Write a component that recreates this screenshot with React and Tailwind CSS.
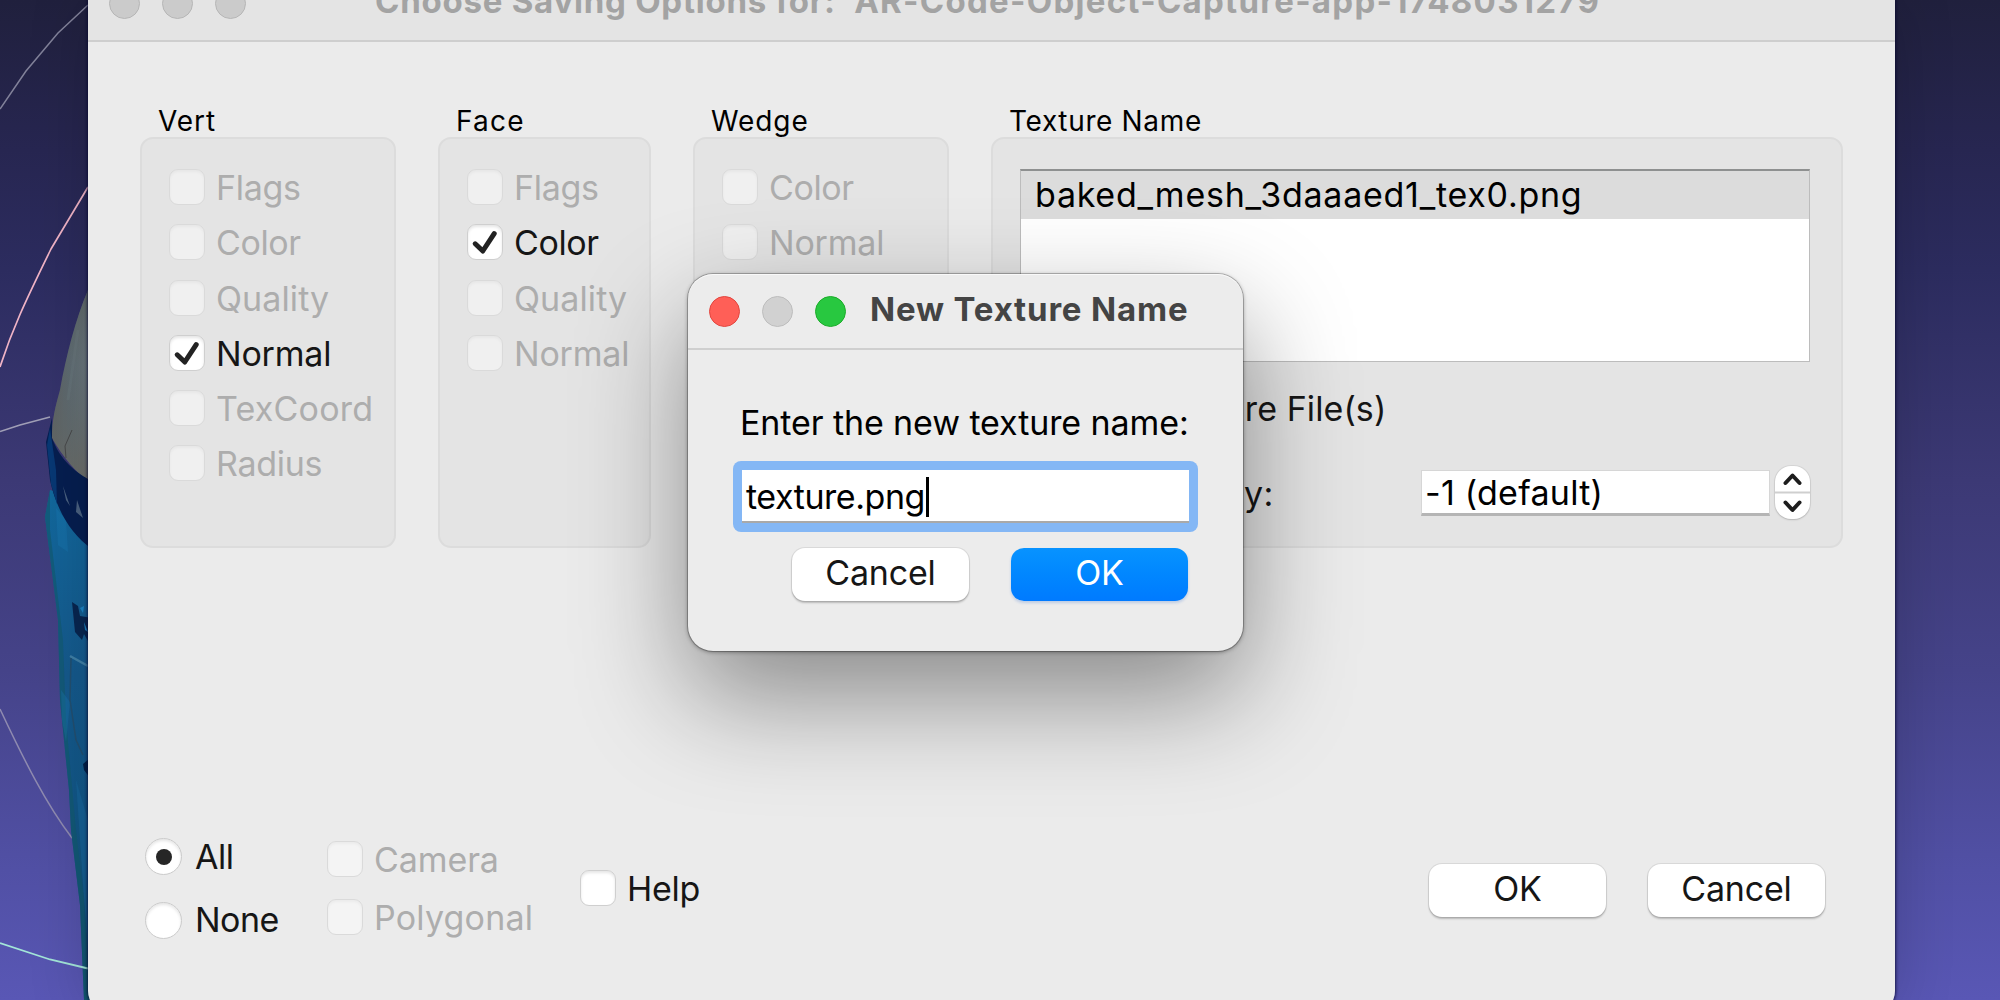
const FONT = "font-['Inter','Liberation_Sans',sans-serif]";

function Scene() {
  return (
    <svg className="absolute left-0 top-0" width="120" height="1000" viewBox="0 0 120 1000" fill="none">
      <defs>
        <linearGradient id="cap" x1="50" y1="0" x2="90" y2="0" gradientUnits="userSpaceOnUse">
          <stop offset="0" stopColor="#5a5e5e" />
          <stop offset="0.5" stopColor="#5f6c73" />
          <stop offset="1" stopColor="#6e7a80" />
        </linearGradient>
        <linearGradient id="capShade" x1="0" y1="290" x2="0" y2="480" gradientUnits="userSpaceOnUse">
          <stop offset="0" stopColor="#555b56" stopOpacity="0.6" />
          <stop offset="0.4" stopColor="#5f6b6f" stopOpacity="0.1" />
          <stop offset="1" stopColor="#6c6b64" stopOpacity="0.8" />
        </linearGradient>
        <linearGradient id="label" x1="0" y1="500" x2="0" y2="1000" gradientUnits="userSpaceOnUse">
          <stop offset="0" stopColor="#12679c" />
          <stop offset="0.35" stopColor="#15598c" />
          <stop offset="0.6" stopColor="#125788" />
          <stop offset="1" stopColor="#14506f" />
        </linearGradient>
      </defs>
      <path d="M0 109 L26 71 L58 33 L88 5" stroke="#82829a" strokeWidth="1.5" />
      <path d="M0 367 C12 330 24 304 51 249 L88 187" stroke="#f0b4c6" strokeWidth="1.7" />
      <path d="M0 431.5 L20 425 L50 417" stroke="#a09fb6" strokeWidth="1.6" />
      <path d="M0 709 C24 760 46 804 72 838" stroke="#8f8bb0" strokeWidth="1.5" />
      <path d="M50 490 L45 517 L58 620 L60 700 L69 790 L71 830 L80 905 L84 1000 L92 1000 L92 500Z" fill="url(#label)" />
      <path d="M50 490 L45 517 L58 620 L60 700 L69 790 L71 830 L80 905 L84 1000 L90 1000 L84 900 L76 830 L66 720 L63 640 L50 530Z" fill="#135a70" opacity="0.7" />
      <path d="M61 690 L70 702 L66 742 L62 720Z M56 508 L66 520 L68 552 L58 545Z" fill="#1b7fb8" opacity="0.3" />
      <path d="M76 780 L88 820 L88 950 L82 870Z" fill="#17659c" opacity="0.6" />
      <path d="M88 290 C76 318 66 356 60 390 C55 408 52 420 52 438 C62 455 76 474 92 483 L92 282Z" fill="url(#cap)" />
      <path d="M88 290 C76 318 66 356 60 390 C55 408 52 420 52 438 C62 455 76 474 92 483 L92 282Z" fill="url(#capShade)" />
      <path d="M72 430 L65 446 L66 458" stroke="#48494a" strokeWidth="1" />
      <path d="M78 330 L68 400" stroke="#6d7a80" strokeWidth="3" opacity="0.35" />
      <path d="M52 418 L46 442 L50 480 C56 508 70 534 92 549 L92 481 C76 473 60 460 52 438Z" fill="#061e50" />
      <path d="M50 428 L47 445 L51 484 L57 504 L56 470Z" fill="#083874" />
      <path d="M63 486 L70 506 L66 500Z M77 500 L83 518 L76 512Z" fill="#4a6180" />
      <path d="M72 602 L78 606 L80 616 L92 618 L92 648 L84 634 L82 640 L75 632Z" fill="#082650" />
      <path d="M80 608 L84 606 L83 613Z M84 622 L88 632 L85 630Z" fill="#1c83c4" />
      <path d="M70 656 L88 666" stroke="#3f7fa6" strokeWidth="2.5" />
      <path d="M71 658 L70 700 L76 740 L83 755" stroke="#224f70" strokeWidth="1.5" />
      <path d="M83 764 L90 758 L90 778 L84 770Z" fill="#04224a" />
      <path d="M0 943 L50 959.5 L88 968.5" stroke="#a3e6d8" strokeWidth="1.8" />
    </svg>
  );
}

function Light({ className }) {
  return <span className={`size-[31px] shrink-0 rounded-full border ${className}`} />;
}

function CheckBox({ label, checked, enabled, tracking = "" }) {
  const box = enabled
    ? "border-[#cfcfcf] bg-white shadow-[inset_0_2px_3px_rgba(0,0,0,0.1)]"
    : "border-[#dadada] bg-white/45 shadow-[inset_0_2px_3px_rgba(0,0,0,0.04)]";
  return (
    <label className="flex h-9 items-center">
      <span className={`flex size-9 shrink-0 items-center justify-center rounded-[9px] border ${box}`}>
        {checked && (
          <svg width="28" height="28" viewBox="0 0 28 28" fill="none">
            <path d="M4.2 15.8 L11.8 23 L23.2 5.6" stroke="#222" strokeWidth="5" strokeLinecap="round" strokeLinejoin="round" />
          </svg>
        )}
      </span>
      <span className={`ml-[11px] whitespace-nowrap pt-[3px] ${enabled ? "text-[#161616]" : "text-[#adadad]"} ${tracking}`}>{label}</span>
    </label>
  );
}

function Radio({ label, checked }) {
  return (
    <label className="flex h-[37px] items-center">
      <span className="flex size-[37px] items-center justify-center rounded-full border border-[#cbcbcb] bg-white shadow-[inset_0_2px_3px_rgba(0,0,0,0.1)]">
        {checked && <span className="size-[16px] rounded-full bg-[#262626]" />}
      </span>
      <span className="ml-[13px] pt-px tracking-[-0.5px] text-[#161616]">{label}</span>
    </label>
  );
}

function Group({ title, width, children, titleTracking = "tracking-[0.9px]" }) {
  return (
    <section className={`flex h-full shrink-0 flex-col ${width}`}>
      <h2 className={`relative z-10 h-[33px] pl-[18px] text-[28px] leading-[34px] text-black ${titleTracking}`}>{title}</h2>
      <div className="min-h-0 flex-1 rounded-[13px] border-2 border-[#dcdcdc] bg-[#e4e4e4]">{children}</div>
    </section>
  );
}

function CheckList({ items }) {
  return (
    <div className="flex flex-col gap-[19.25px] pl-[27px] pt-[30px]">
      {items.map((item) => (
        <CheckBox key={item.label} {...item} />
      ))}
    </div>
  );
}

function Button({ children, className }) {
  return (
    <button
      className={`flex h-[53px] w-[177px] shrink-0 items-center justify-center rounded-[13px] pb-[2px] tracking-[-0.2px] ${className}`}
    >
      {children}
    </button>
  );
}

const PLAIN = "bg-white text-[#161616] shadow-[0_0_0_1px_rgba(0,0,0,0.08),0_2px_2px_rgba(0,0,0,0.22)]";

const VERT = [
  { label: "Flags", tracking: "tracking-[-0.3px]" },
  { label: "Color", tracking: "tracking-[-0.4px]" },
  { label: "Quality", tracking: "tracking-[0.1px]" },
  { label: "Normal", checked: true, enabled: true, tracking: "tracking-[-0.2px]" },
  { label: "TexCoord", tracking: "tracking-[0.2px]" },
  { label: "Radius", tracking: "tracking-[-0.3px]" },
];
const FACE = [
  { label: "Flags", tracking: "tracking-[-0.3px]" },
  { label: "Color", checked: true, enabled: true, tracking: "tracking-[-0.4px]" },
  { label: "Quality", tracking: "tracking-[0.1px]" },
  { label: "Normal", tracking: "tracking-[-0.2px]" },
];
const WEDGE = [
  { label: "Color", tracking: "tracking-[-0.4px]" },
  { label: "Normal", tracking: "tracking-[-0.2px]" },
];

function TexturePanel() {
  return (
    <div className="flex flex-col pl-[27px] pt-[30px]">
      <div className="h-[193px] w-[790px] border border-[#bcbcbc] border-t-2 border-t-[#8e9090] bg-white">
        <div className="flex h-[48px] items-center bg-[#dcdcdc] pl-[14px] tracking-[0.74px] text-black">
          baked_mesh_3daaaed1_tex0.png
        </div>
      </div>
      <div className="mt-[28px]">
        <CheckBox label="Save Texture File(s)" enabled tracking="tracking-[0.08px]" />
      </div>
      <div className="mt-[39px] flex h-[55px] items-center">
        <span className="w-[401px] pt-[3px] tracking-[0.38px] text-[#161616]">Texture quality:</span>
        <span className="flex h-[46px] w-[349px] items-center border border-b-[3px] border-[#d6d6d6] border-b-[#b5b5b5] bg-white pl-[3px] pt-[3px] tracking-[0.25px] text-black">
          -1 (default)
        </span>
        <span className="ml-[5px] flex h-[53px] w-[35px] flex-col items-center rounded-[16px] bg-white shadow-[0_0_0_1px_rgba(0,0,0,0.06),0_1px_2px_rgba(0,0,0,0.15)]">
          <svg width="35" height="53" viewBox="0 0 35 53" fill="none">
            <path d="M0 26.5 H35" stroke="#cfcfcf" strokeWidth="2" />
            <path d="M10.5 17 L17.5 9.5 L24.5 17 M10.5 36.5 L17.5 44 L24.5 36.5" stroke="#1d1d1d" strokeWidth="4" strokeLinecap="round" strokeLinejoin="round" />
          </svg>
        </span>
      </div>
    </div>
  );
}

function SaveWindow() {
  return (
    <main className="relative ml-[88px] flex h-[1013px] w-[1807px] flex-col overflow-hidden rounded-b-[22px] bg-[#ebebeb]">
      <header className="h-[42px] overflow-hidden border-b-2 border-[#cecece] bg-[#e4e4e4]">
        <div className="-mt-[35px] flex h-[76px] items-center pl-[21px]">
          <div className="flex gap-[22px]">
            <Light className="border-[#b6b6b6] bg-[#cbcbcb]" />
            <Light className="border-[#b6b6b6] bg-[#cbcbcb]" />
            <Light className="border-[#b6b6b6] bg-[#cbcbcb]" />
          </div>
          <h1 className="ml-[129px] whitespace-nowrap pb-[3px] text-[33px] font-bold tracking-[0.76px] text-[#a3a3a3]">
            Choose Saving Options for: <span className="tracking-[1.28px]">'AR-Code-Object-Capture-app-1748031279'</span>
          </h1>
        </div>
      </header>
      <div className="mt-[62px] flex h-[444px] gap-[42px] pl-[52px]">
        <Group title="Vert" width="w-[256px]">
          <CheckList items={VERT} />
        </Group>
        <Group title="Face" width="w-[213px]" titleTracking="tracking-[1.2px]">
          <CheckList items={FACE} />
        </Group>
        <Group title="Wedge" width="w-[256px]">
          <CheckList items={WEDGE} />
        </Group>
        <Group title="Texture Name" width="w-[852px]" titleTracking="tracking-[0.65px]">
          <TexturePanel />
        </Group>
      </div>
      <footer className="mt-[285px] flex items-start pl-[57px]">
        <div className="flex w-[182px] flex-col gap-[26.5px] pt-[5px]">
          <Radio label="All" checked />
          <Radio label="None" />
        </div>
        <div className="flex w-[252px] flex-col gap-[22px] pt-[7.5px]">
          <CheckBox label="Camera" tracking="tracking-[-0.1px]" />
          <CheckBox label="Polygonal" tracking="tracking-[0.2px]" />
        </div>
        <div className="w-[850px] pl-px pt-[36.5px]">
          <CheckBox label="Help" enabled tracking="tracking-[-0.3px]" />
        </div>
        <div className="flex gap-[42px] pt-[30.5px]">
          <Button className={PLAIN}>OK</Button>
          <Button className={PLAIN}>Cancel</Button>
        </div>
      </footer>
    </main>
  );
}

function TextureDialog() {
  return (
    <div
      role="dialog"
      className="absolute left-[688px] top-[274px] flex h-[377px] w-[555px] flex-col rounded-[25px] bg-[#ececec] shadow-[0_0_0_1px_rgba(0,0,0,0.22),0_1px_4px_rgba(0,0,0,0.4),0_45px_110px_rgba(0,0,0,0.42)]"
    >
      <header className="flex h-[76px] items-center rounded-t-[25px] border-b-2 border-[#cfcfcf] pl-[20.5px] shadow-[inset_0_1px_0_rgba(255,255,255,0.7)]">
        <div className="flex gap-[22px]">
          <Light className="border-[#e2463f] bg-[#ff5f57]" />
          <Light className="border-[#bdbdbd] bg-[#d1d1d1]" />
          <Light className="border-[#1dad2b] bg-[#28c840]" />
        </div>
        <h2 className="ml-[24.5px] whitespace-nowrap pb-[2px] text-[33px] font-bold tracking-[0.83px] text-[#444]">New Texture Name</h2>
      </header>
      <div className="flex flex-col pl-[45px] pt-[52px]">
        <p className="h-[42px] whitespace-nowrap pl-[7px] leading-[42px] tracking-[-0.1px] text-black">Enter the new texture name:</p>
        <div className="mt-[17px] h-[71px] w-[465px] rounded-[8px] bg-[#84b7f5] p-[9px]">
          <div className="flex h-[53px] items-center border-b-2 border-[#a9a9a9] bg-white pl-[4px] pt-[3px]">
            <span className="pt-px tracking-[-0.45px] text-black">texture.png</span>
            <span className="ml-[1px] h-[40px] w-[3px] bg-black" />
          </div>
        </div>
        <div className="mt-[16px] flex w-[455px] justify-end gap-[42px]">
          <Button className={PLAIN}>Cancel</Button>
          <Button className="bg-linear-to-b from-[#0893ff] to-[#007aff] text-white shadow-[0_2px_3px_rgba(0,80,200,0.2)]">OK</Button>
        </div>
      </div>
    </div>
  );
}

export default function App() {
  return (
    <div
      className={`relative h-[1000px] w-[2000px] overflow-hidden bg-[linear-gradient(180deg,#20203d_0%,#272651_15%,#2c2c5f_27%,#3c3975_48%,#454389_67%,#5150a5_87%,#5957b5_100%)] text-[34px] leading-[1.2] ${FONT}`}
    >
      <Scene />
      <div className="absolute left-[88px] top-0 h-[1013px] w-[1807px] rounded-b-[22px] shadow-[0_0_3px_1px_rgba(8,8,45,0.75),0_0_60px_rgba(0,0,0,0.18)]" />
      <SaveWindow />
      <TextureDialog />
    </div>
  );
}
